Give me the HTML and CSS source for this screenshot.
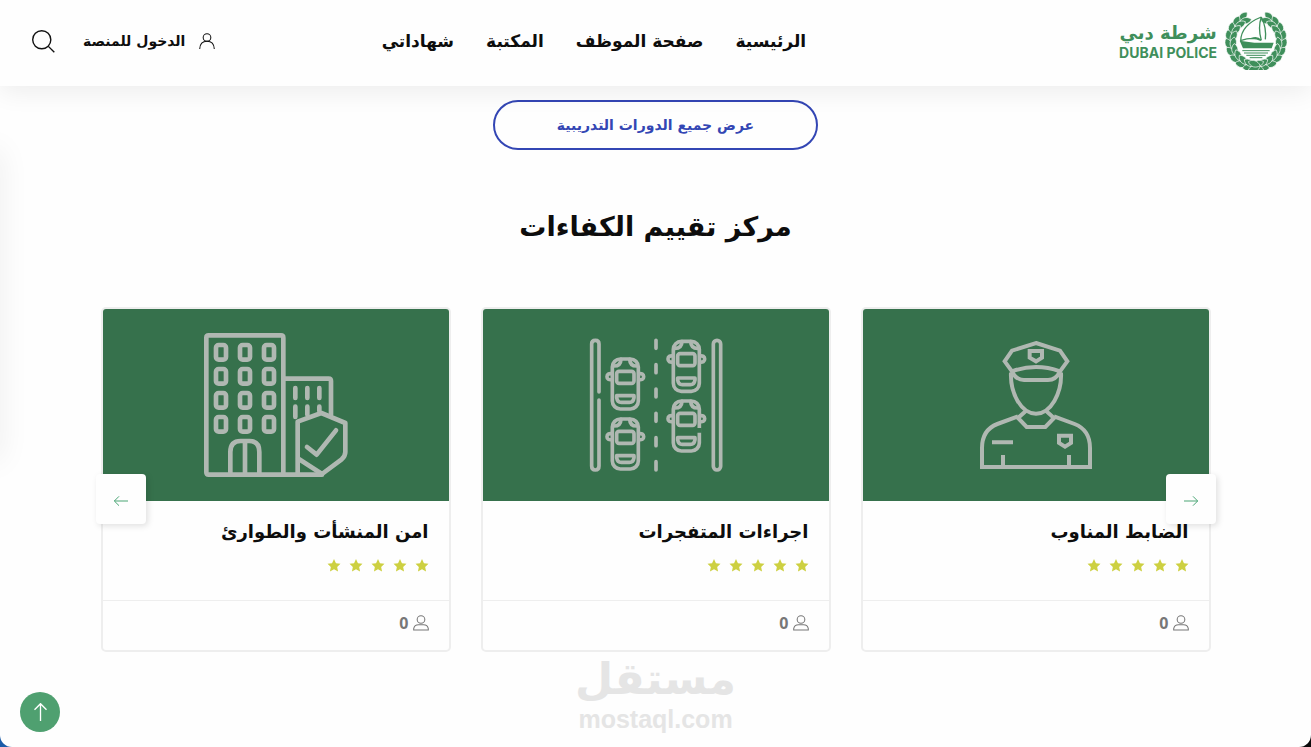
FILE: index.html
```html
<!DOCTYPE html>
<html lang="ar" dir="rtl">
<head>
<meta charset="utf-8">
<meta name="viewport" content="width=device-width, initial-scale=1">
<title>شرطة دبي</title>
<link rel="stylesheet" href="styles.css">
</head>
<body>
<svg class="defs" aria-hidden="true">
  <defs>
    <g id="sprig">
      <path d="M10-74C6-92-12-98-26-87C-22-75-8-68 10-74Z"/>
      <path d="M10-74C-2-82-20-79-25-61C-12-53 4-60 10-74Z"/>
    </g>
    <g id="branch">
      <use href="#sprig" transform="rotate(34)"/><use href="#sprig" transform="rotate(51)"/><use href="#sprig" transform="rotate(68)"/>
      <use href="#sprig" transform="rotate(85)"/><use href="#sprig" transform="rotate(102)"/><use href="#sprig" transform="rotate(119)"/>
      <use href="#sprig" transform="rotate(136)"/><use href="#sprig" transform="rotate(153)"/><use href="#sprig" transform="rotate(170)"/><use href="#sprig" transform="rotate(182)"/>
    </g>
    <g id="car">
      <rect x="-39" y="6" width="78" height="150" rx="24"/>
      <rect x="-26" y="43" width="52" height="36" rx="7"/>
      <path d="M-26 116H26V122Q24 136 12 136H-12Q-24 136-26 122Z"/>
      <path d="M-36 27Q-14 28-13 7M36 27Q14 28 13 7"/>
      <path d="M-40 50Q-55 48-55 59T-40 68M40 50Q55 48 55 59T40 68"/>
    </g>
    <rect id="window" width="30" height="44" rx="8"/>
    <symbol id="star" viewBox="0 0 24 24"><path d="M12 0l3.6 7.8 8.4 1-6.200 5.900L19.500 23 12 18.800 4.500 23l1.700-8.300L0 8.800l8.400-1z"/></symbol>
    <symbol id="person" viewBox="0 0 46 46"><circle cx="23" cy="13" r="11"/><path d="M2 43V39Q4 28 16 28H30Q42 28 44 39V43Z"/></symbol>
  </defs>
</svg>

<header class="header">
  <a class="logo" href="#" aria-label="Dubai Police">
    <svg class="logo__emblem" viewBox="-91 -87 182 174" aria-hidden="true">
      <use class="logo__leaf" href="#branch"/>
      <use class="logo__leaf" href="#branch" transform="scale(-1 1)"/>
      <circle class="logo__ring" r="56"/>
      <path class="logo__sail" d="M16-72Q-45-48-46 0M16-72Q5-40 16-2M16-72Q32-40 28-5M-44-2Q-10-14 15-2Q4-15-15-7"/>
      <path class="logo__hull" d="M-49-1L-5 5H53L47 22H-39Z"/>
      <path class="logo__sea" d="M-41 29H41M-36 36H36M-29 43H29M-19 50H19"/>
    </svg>
    <span class="logo__text"><span class="logo__ar">شرطة دبي</span><span class="logo__en" dir="ltr">DUBAI POLICE</span></span>
  </a>
  <nav class="nav">
    <a href="#">الرئيسية</a><a href="#">صفحة الموظف</a><a href="#">المكتبة</a><a href="#">شهاداتي</a>
  </nav>
  <div class="actions">
    <a class="login" href="#">
      <svg class="login__icon" viewBox="0 0 46 46" aria-hidden="true"><circle cx="23" cy="13" r="11"/><path d="M2 46Q3 24 23 24T44 46"/></svg>
      <span>الدخول للمنصة</span>
    </a>
    <button class="search" type="button" aria-label="بحث">
      <svg viewBox="0 0 66 66" aria-hidden="true"><circle cx="28" cy="28" r="26"/><path d="M47 47L64 64"/></svg>
    </button>
  </div>
</header>

<div class="edge-shadow"></div>

<main class="main">
  <a class="all-courses" href="#">عرض جميع الدورات التدريبية</a>
  <h2 class="heading">مركز تقييم الكفاءات</h2>

  <section class="slider">
    <div class="cards">
      <article class="card">
        <div class="card__media">
          <svg class="art art--square" viewBox="-42 0 540 510" aria-hidden="true">
            <path d="M228 69L300 92L322 124L300 154Q228 128 156 154L134 124L156 92Z"/>
            <path d="M156 154Q168 180 192 180H264Q288 180 300 154"/>
            <path d="M153 158C150 220 184 281 228 281S306 220 303 158"/>
            <path d="M209 93H246V113L228 124L209 113Z"/>
            <path d="M200 271L174 294L200 321H256L282 294L256 271"/>
            <path d="M174 289L112 312Q66 330 66 384V441H390V384Q390 330 344 312L282 289"/>
            <path d="M96 367H159M129 405V441M327 405V441M297 347H333V369L315 380L297 369Z"/>
          </svg>
        </div>
        <div class="card__body">
          <h3 class="card__title">الضابط المناوب</h3>
          <div class="stars" role="img" aria-label="5/5"><svg><use href="#star"/></svg><svg><use href="#star"/></svg><svg><use href="#star"/></svg><svg><use href="#star"/></svg><svg><use href="#star"/></svg></div>
        </div>
        <div class="card__foot"><svg class="card__person"><use href="#person"/></svg><span>0</span></div>
      </article>

      <article class="card">
        <div class="card__media">
          <svg class="art art--cars" viewBox="-12 0 540 510" aria-hidden="true">
            <path d="M87 216V72Q87 61 76 61T65 72V438Q65 450 76 450T87 438V240"/>
            <rect x="430" y="61" width="22" height="389" rx="11"/>
            <path d="M258 61V85M258 134V158M258 207V231M258 280V304M258 353V377M258 425V450"/>
            <use href="#car" x="166" y="111"/><use href="#car" x="166" y="291"/><use href="#car" x="349" y="58"/><use href="#car" x="349" y="237"/>
            <path class="art__gap" d="M388 324V338"/>
          </svg>
        </div>
        <div class="card__body">
          <h3 class="card__title">اجراءات المتفجرات</h3>
          <div class="stars" role="img" aria-label="5/5"><svg><use href="#star"/></svg><svg><use href="#star"/></svg><svg><use href="#star"/></svg><svg><use href="#star"/></svg><svg><use href="#star"/></svg></div>
        </div>
        <div class="card__foot"><svg class="card__person"><use href="#person"/></svg><span>0</span></div>
      </article>

      <article class="card">
        <div class="card__media">
          <svg class="art art--bold" viewBox="-12 0 540 510" aria-hidden="true">
            <path d="M280 464V53Q280 46 273 46H56Q49 46 49 53V457Q49 464 56 464H396"/>
            <use href="#window" x="78" y="75"/><use href="#window" x="150" y="75"/><use href="#window" x="222" y="75"/>
            <use href="#window" x="78" y="147"/><use href="#window" x="150" y="147"/><use href="#window" x="222" y="147"/>
            <use href="#window" x="78" y="219"/><use href="#window" x="150" y="219"/><use href="#window" x="222" y="219"/>
            <use href="#window" x="78" y="291"/><use href="#window" x="150" y="291"/><use href="#window" x="222" y="291"/>
            <path d="M121 464V396Q121 363 152 363H178Q208 363 208 396V464M165 363V464"/>
            <path d="M280 176H416Q423 176 423 183V284M316 204V234M352 204V234M388 204V234M316 260V291M352 260V284M388 260V273"/>
            <path d="M323 464V305L394 279L466 309V396Q466 408 455 418L396 462L323 415M351 381L380 404L438 331"/>
          </svg>
        </div>
        <div class="card__body">
          <h3 class="card__title">امن المنشأت والطوارئ</h3>
          <div class="stars" role="img" aria-label="5/5"><svg><use href="#star"/></svg><svg><use href="#star"/></svg><svg><use href="#star"/></svg><svg><use href="#star"/></svg><svg><use href="#star"/></svg></div>
        </div>
        <div class="card__foot"><svg class="card__person"><use href="#person"/></svg><span>0</span></div>
      </article>
    </div>
    <button class="arrow arrow--right" type="button" aria-label="السابق"><svg viewBox="0 0 42 30" aria-hidden="true"><path d="M0 15H41M27 1L41 15L27 29"/></svg></button>
    <button class="arrow arrow--left" type="button" aria-label="التالي"><svg viewBox="0 0 42 30" aria-hidden="true"><path d="M42 15H1M15 1L1 15L15 29"/></svg></button>
  </section>

  <div class="watermark">
    <span class="watermark__ar">مستقل</span>
    <span class="watermark__en" dir="ltr">mostaql.com</span>
  </div>
</main>

<button class="to-top" type="button" aria-label="إلى الأعلى"><svg viewBox="0 0 38 54" aria-hidden="true"><path d="M19 54V2M1 20L19 2L37 20"/></svg></button>
</body>
</html>
```
FILE: styles.css
```css
* { box-sizing: border-box; }

html { background: linear-gradient(to right, #1c5ca8 50%, #0b0b0b 50%); }

body {
  position: relative;
  min-height: 100vh;
  margin: 0;
  overflow-x: hidden;
  border-radius: 0 0 12px 12px;
  background: #fefefe;
  color: #0d0d0d;
  font-family: "DejaVu Sans", sans-serif;
  font-weight: 700;
}

a { color: inherit; text-decoration: none; }
button { padding: 0; border: 0; background: none; cursor: pointer; }
svg { display: block; }
.defs { position: absolute; width: 0; height: 0; }

.header {
  position: relative;
  z-index: 2;
  display: grid;
  grid-template-columns: 38% 1fr auto;
  align-items: center;
  height: 86px;
  padding: 0 24px 4px 32px;
  background: #fefefe;
  box-shadow: 0 6px 24px rgba(0, 0, 0, 0.07);
}

.logo { display: flex; align-items: center; gap: 8px; color: #3f8f5b; }
.logo__emblem { width: 62px; height: 58px; }
.logo__leaf { fill: #3f8f5b; stroke: #fefefe; stroke-width: 2; }
.logo__ring { fill: #fefefe; }
.logo__sail { fill: none; stroke: #3f8f5b; stroke-width: 4; }
.logo__hull { fill: #3f8f5b; }
.logo__sea { stroke: #3f8f5b; stroke-width: 3; }
.logo__text { display: flex; flex-direction: column; align-items: center; }
.logo__ar { font-size: 18px; line-height: 24px; }
.logo__en { font-family: Inter, sans-serif; font-size: 14px; line-height: 16px; }

.nav { display: flex; gap: 32px; padding-right: 4px; font-size: 17px; white-space: nowrap; }

.actions { display: flex; align-items: center; gap: 28px; }
.login { display: flex; align-items: center; gap: 14px; font-size: 14px; white-space: nowrap; }
.login__icon { width: 16px; height: 16px; fill: none; stroke: #111; stroke-width: 3; }
.search svg { width: 23px; height: 23px; fill: none; stroke: #111; stroke-width: 4; }

.edge-shadow {
  position: absolute;
  top: 150px;
  left: -20px;
  width: 20px;
  height: 310px;
  box-shadow: 0 0 30px rgba(0, 0, 0, 0.08);
}

.main {
  display: flex;
  flex-direction: column;
  align-items: center;
  max-width: 1140px;
  margin: 0 auto;
  padding: 14px 15px;
}

.all-courses {
  display: flex;
  align-items: center;
  justify-content: center;
  min-width: 325px;
  height: 50px;
  border: 2px solid #3346b4;
  border-radius: 25px;
  color: #3346b4;
  font-size: 14px;
}

.heading { margin: 55px 0 58px; font-size: 27px; line-height: 44px; }

.slider { position: relative; width: 100%; }
.cards { display: grid; grid-template-columns: repeat(3, 1fr); gap: 30px; }

.card { overflow: hidden; border: 2px solid #eee; border-radius: 5px; background: #fefefe; }
.card__media { display: flex; align-items: center; justify-content: center; height: 192px; background: #36714c; }
.art { width: 180px; height: 170px; fill: none; stroke: #b0b8b2; stroke-linecap: round; stroke-linejoin: round; }
.art--cars { stroke-width: 11; }
.art--square { stroke-width: 12; stroke-linecap: butt; stroke-linejoin: miter; }
.art--bold { stroke-width: 14; }
.art__gap { stroke: #36714c; stroke-width: 14; stroke-linecap: butt; }

.card__body { padding: 16px 20px 28px; }
.card__title { margin: 0 0 12px; font-size: 18px; line-height: 30px; white-space: nowrap; }
.stars { display: flex; gap: 8px; }
.stars svg { width: 14px; height: 13px; fill: #cdd041; }
.card__foot {
  display: flex;
  align-items: center;
  gap: 4px;
  height: 50px;
  padding: 0 20px 5px;
  border-top: 1px solid #eee;
  color: #777;
  font-family: "Open Sans", sans-serif;
  font-size: 16px;
}
.card__person { width: 16px; height: 16px; fill: none; stroke: #777; stroke-width: 3; }

.arrow {
  position: absolute;
  top: 167px;
  display: flex;
  align-items: center;
  justify-content: center;
  width: 50px;
  height: 50px;
  padding-top: 4px;
  border-radius: 4px;
  background: #fefefe;
  box-shadow: 2px 2px 6px rgba(0, 0, 0, 0.12);
}
.arrow--right { right: -5px; }
.arrow--left { left: -5px; }
.arrow svg { width: 14px; height: 10px; fill: none; stroke: #4aa575; stroke-width: 3; }

.watermark { display: flex; flex-direction: column; align-items: center; color: #e5e5e5; }
.watermark__ar { font-size: 44px; line-height: 54px; }
.watermark__en { font-family: "Liberation Sans", sans-serif; font-size: 25px; line-height: 26px; }

.to-top {
  position: fixed;
  bottom: 15px;
  left: 20px;
  display: flex;
  align-items: center;
  justify-content: center;
  width: 40px;
  height: 40px;
  border-radius: 50%;
  background: #4fa070;
}
.to-top svg { width: 13px; height: 18px; fill: none; stroke: #fff; stroke-width: 4; }
```
